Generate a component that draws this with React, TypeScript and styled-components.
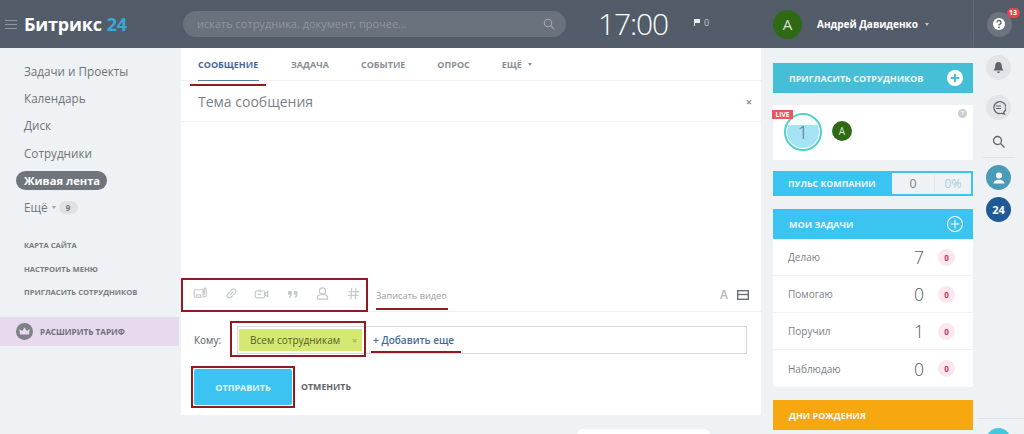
import React from "react";
import styled, { createGlobalStyle } from "styled-components";

const Global = createGlobalStyle`
  html, body { margin: 0; padding: 0; height: 434px; overflow: hidden; background: #eef2f4; }
  body { font-family: "Open Sans", "Liberation Sans", sans-serif; }
  * { box-sizing: border-box; }
`;

const RED = "#8e1c22";

const Page = styled.div`
  width: 1024px; height: 434px; position: relative; overflow: hidden;
  display: flex; flex-direction: column; background: #eef2f4;
`;
const Header = styled.header`
  height: 48px; flex: none; display: flex; align-items: center;
  background: linear-gradient(#525b67, #535d6b);
`;
const Burger = styled.div`
  width: 12px; margin-left: 5px; display: flex; flex-direction: column; gap: 3px;
  span { display: block; height: 1px; background: #8f969f; }
`;
const Logo = styled.div`
  margin-left: 7px; width: 159px; font-size: 18px; font-weight: 700; color: #fff; line-height: 46px; white-space: nowrap; letter-spacing: -0.2px;
  b { color: #36a9d8; font-weight: 700; margin-left: 5px; }
`;
const Search = styled.div`
  width: 383px; height: 26px; border-radius: 13px; background: #6a727e; display: flex; align-items: center; margin-top: -1px;
  justify-content: space-between; padding: 0 11px 0 14px; font-size: 11px; color: #8f959d;
`;
const Clock = styled.div`
  margin-left: 32px; width: 96px; font-size: 30px; font-weight: 300; color: #fff; letter-spacing: -1.1px; margin-top: -2px;
`;
const FlagCount = styled.div`
  width: 79px; display: flex; align-items: center; gap: 4px; font-size: 9px; color: #c3c8ce; margin-top: -3px;
`;
const Avatar = styled.div<{ $size: number }>`
  width: ${p => p.$size}px; height: ${p => p.$size}px; border-radius: 50%; background: #2e6a14; flex: none;
  color: #d7e4cf; display: flex; align-items: center; justify-content: center; font-size: ${p => Math.round(p.$size * 0.5)}px;
`;
const UserName = styled.div`
  margin-left: 15px; width: 156px; font-size: 10px; font-weight: 700; color: #fff; white-space: nowrap;
  display: flex; align-items: center; gap: 7px;
`;
const Caret = styled.i<{ $c: string }>`
  display: inline-block; width: 0; height: 0; border: 2.5px solid transparent; border-top: 3px solid ${p => p.$c}; border-bottom: 0;
`;
const HelpCell = styled.div`
  width: 51px; height: 48px; border-left: 1px solid #626a76; display: flex; align-items: center; justify-content: center;
`;
const RoundBtn = styled.div<{ $bg?: string; $mt?: number }>`
  width: 25px; height: 25px; border-radius: 50%; background: ${p => p.$bg || "#e2e5e8"}; position: relative;
  display: flex; align-items: center; justify-content: center; flex: none; margin-top: ${p => p.$mt || 0}px;
  color: #fff; font-size: 11px; font-weight: 700;
`;
const Badge = styled.span`
  position: absolute; top: -4px; right: -8px; height: 10px; min-width: 13px; padding: 0 2px; border-radius: 5px; background: #e0464d;
  color: #fff; font-size: 7px; font-weight: 700; line-height: 10px; text-align: center;
`;

const Body = styled.div`flex: 1; display: flex; min-height: 0;`;
const Side = styled.nav`width: 181px; flex: none; display: flex; flex-direction: column; padding-top: 14px;`;
const SideItem = styled.div<{ $active?: boolean }>`
  height: 19px; margin: 0 0 8.2px ${p => (p.$active ? 16 : 24)}px; font-size: ${p => (p.$active ? 11.2 : 11.7)}px; line-height: 19px; white-space: nowrap;
  color: ${p => (p.$active ? "#fff" : "#6f7479")}; display: flex; align-items: center; gap: 4px;
  ${p => p.$active && "width: 91px; padding-left: 8px; background: #70757d; border-radius: 10px; font-weight: 700;"}
`;
const Count = styled.span`
  width: 19px; height: 13px; border-radius: 7px; background: #dfe2e5; color: #6f7479; font-size: 8px; font-weight: 700; margin-left: -1px;
  display: flex; align-items: center; justify-content: center;
`;
const SmallLinks = styled.div`
  margin: 14px 0 0 24px; display: flex; flex-direction: column; gap: 11.5px; font-size: 7.6px; font-weight: 700; color: #777c82; line-height: 12px;
`;
const Upgrade = styled.div`
  margin-top: 19px; width: 179px; height: 29px; background: #e8daee; display: flex; align-items: center; padding-left: 16px; gap: 7px;
  font-size: 8.2px; font-weight: 700; color: #6b6f75;
`;
const Crown = styled.div`
  width: 17px; height: 17px; border-radius: 50%; background: #7d8087; display: flex; align-items: center; justify-content: center;
`;

const Main = styled.main`
  width: 580px; height: 367px; flex: none; background: #fff; display: flex; flex-direction: column; position: relative; padding-bottom: 7px;
`;
const Tabs = styled.div`
  height: 33px; flex: none; border-bottom: 1px solid #eef0f2; display: flex; padding-left: 17px; gap: 32px;
  font-size: 9px; font-weight: 700; color: #8a8f94;
`;
const Tab = styled.div<{ $active?: boolean }>`
  height: 33px; line-height: 33px; position: relative; white-space: nowrap; display: flex; align-items: center; gap: 6px;
  ${p => p.$active && "color: #3f6a9c; border-bottom: 1px solid #5b7f9f; min-width: 61px;"}
`;
const RedLine = styled.span<{ $w: number; $l: number; $b: number }>`
  position: absolute; height: 2px; background: ${RED}; width: ${p => p.$w}px; left: ${p => p.$l}px; bottom: ${p => p.$b}px;
`;
const Subject = styled.div`
  height: 41px; flex: none; border-bottom: 1px solid #f0f2f3; display: flex; align-items: center; justify-content: space-between;
  padding: 0 9px 0 17px; font-size: 14px; color: #7c8186;
`;
const Close = styled.span`font-size: 11px; font-weight: 700; color: #8c9196; line-height: 1;`;
const Editor = styled.div`flex: 1;`;
const ToolRow = styled.div`
  height: 34px; flex: none; border-bottom: 1px solid #eef0f2; display: flex; align-items: center; position: relative;
`;
const ToolBox = styled.div`
  width: 187px; height: 34px; border: 2px solid ${RED}; display: flex; align-items: center; justify-content: space-between; padding: 0 5px 2px 10px;
`;
const VideoLink = styled.div`
  margin-left: 8px; font-size: 9.2px; color: #9a9ea3; position: relative; line-height: 28px; top: 1px;
`;
const ToolRight = styled.div`
  margin-left: auto; margin-right: 12px; display: flex; align-items: center; gap: 9px;
  font-size: 12px; font-weight: 600; color: #b5b8bb;
`;
const ToRow = styled.div`
  margin-top: 14px; height: 28px; flex: none; display: flex; align-items: center; padding-left: 13px; font-size: 10px; color: #55595e;
`;
const ToField = styled.div`
  margin-left: 16px; width: 510px; height: 28px; border: 1px solid #d6d9dc; display: flex; align-items: center; position: relative; padding-left: 1px;
`;
const RedBox = styled.div`
  position: absolute; left: -8px; top: -6px; width: 136px; height: 36px; border: 2px solid ${RED}; pointer-events: none;
`;
const Chip = styled.div`
  width: 123px; height: 22px; background: #d4e972; color: #54592e; font-size: 10px; display: flex; align-items: center; justify-content: space-between;
  padding: 0 5px 0 11px; white-space: nowrap;
  i { font-style: normal; color: #a4b54f; font-weight: 700; font-size: 9px; }
`;
const AddMore = styled.div`
  margin-left: 11px; color: #3f6a9c; font-size: 10px; font-weight: 600; position: relative; white-space: nowrap;
`;
const Actions = styled.div`
  margin-top: 12px; display: flex; align-items: center; padding-left: 10px;
`;
const SendBox = styled.div`
  width: 104px; height: 42px; border: 2px solid ${RED}; padding: 1px; display: flex;
`;
const Send = styled.button`
  flex: 1; border: 0; border-radius: 2px; background: #3bc4f2; color: #e4f6fc; font: 700 9px "Open Sans", sans-serif;
`;
const Cancel = styled.div`margin-left: 6px; font-size: 8.8px; font-weight: 700; color: #5f6368;`;
const BottomTab = styled.div`
  position: absolute; left: 577px; top: 429px; width: 133px; height: 6px; background: #fff; border-radius: 6px 6px 0 0;
`;

const Right = styled.aside`
  width: 200px; flex: none; margin-left: 12px; padding-top: 15px; display: flex; flex-direction: column;
`;
const BarHead = styled.div<{ $bg: string }>`
  height: 30px; flex: none; background: ${p => p.$bg}; color: #f0f9fc; font-size: 9px; font-weight: 700; display: flex; align-items: center;
  justify-content: space-between; padding: 0 10px 0 16px; white-space: nowrap;
`;
const LiveCard = styled.div`
  margin-top: 12px; height: 55px; background: #fff; position: relative; display: flex; align-items: flex-start; padding: 8px 0 0 11px;
`;
const LiveTag = styled.span`
  position: absolute; left: -1px; top: 5px; height: 9px; width: 21px; background: #e8575c; color: #fff; font-size: 6.6px; font-weight: 700;
  line-height: 9px; text-align: center;
`;
const LiveHint = styled.span`
  position: absolute; right: 6px; top: 4px; width: 9px; height: 9px; border-radius: 50%; background: #c9ccd0; color: #fff; font-size: 6px; font-weight: 700;
  line-height: 9px; text-align: center;
`;
const Ring = styled.div`
  width: 38px; height: 38px; border-radius: 50%; border: 2px solid #4fd1c6; padding: 1px; flex: none; display: flex;
`;
const Water = styled.div`
  flex: 1; border-radius: 50%; background: linear-gradient(#f4fbfd 28%, #a5e2f4 28%); color: #4f6c78; font-size: 18px; font-weight: 300;
  display: flex; align-items: center; justify-content: center;
`;
const LiveAvatar = styled.div`margin: 8px 0 0 10px;`;
const Pulse = styled.div`
  margin-top: 11px; height: 25px; background: #3bc4f2; display: flex; align-items: center; padding: 2px 2px 2px 15px;
  color: #f0f9fc; font-size: 8.8px; font-weight: 700; white-space: nowrap;
`;
const PulseBox = styled.div`
  margin-left: auto; width: 79px; height: 21px; background: #eef2f4; display: flex; align-items: center; font-weight: 400; font-size: 12.5px; color: #7f8489;
  span { flex: 1; text-align: center; }
  span + span { flex: none; width: 37px; border-left: 1px solid #dfe5e8; color: #a9cedb; font-size: 12px; }
`;
const Tasks = styled.div`
  margin-top: 13px; flex: none; display: flex; flex-direction: column;
`;
const TaskRow = styled.div`
  height: 37px; background: #fff; border-bottom: 1px solid #f0f2f3; display: flex; align-items: center; padding-left: 15px; font-size: 10px; color: #7a7f84;
  &:last-child { border-bottom: 0; border-radius: 0 0 3px 3px; }
`;
const TaskNum = styled.span`
  margin-left: auto; font-size: 17.5px; font-weight: 300; color: #555a60; width: 20px; text-align: center;
`;
const ZeroBadge = styled.span`
  width: 17px; height: 17px; border-radius: 50%; background: #fde7ed; color: #c0395f; font-size: 8px; font-weight: 700; display: flex; align-items: center; justify-content: center;
  margin: 0 18px 0 9px;
`;
const Birthdays = styled.div`margin-top: 13px;`;
const Rail = styled.div`
  width: 51px; flex: none; display: flex; flex-direction: column; align-items: center; padding-top: 7px; position: relative;
`;
const RailSearch = styled.div`margin-top: 15px; height: 13px; display: flex;`;
const RailDivider = styled.div`width: 32px; height: 1px; background: #dfe2e5; margin-top: 9px; flex: none;`;
const RailFoot = styled.div`
  position: absolute; left: 4px; right: 0; top: 370px; border-top: 1px solid #dfe2e5; display: flex; justify-content: center; padding-top: 9px; padding-right: 4px;
`;

const Ico = { width: 15, height: 15, viewBox: "0 0 24 24", fill: "none", stroke: "#c6c9cc", strokeWidth: 1.9 } as const;

export default function App() {
  return (
    <Page>
      <Global />
      <Header>
        <Burger><span /><span /><span /></Burger>
        <Logo>Битрикс<b>24</b></Logo>
        <Search>
          <span>искать сотрудника, документ, прочее...</span>
          <svg width="12" height="12" viewBox="0 0 12 12" fill="none" stroke="#a3a8af" strokeWidth="1.1"><circle cx="5" cy="5" r="3.7" /><path d="M8 8l3 3" /></svg>
        </Search>
        <Clock>17:00</Clock>
        <FlagCount>
          <svg width="6" height="7" viewBox="0 0 6 7" fill="#e8eaec"><path d="M0 0h6v4H1v3H0z" /></svg>
          <span>0</span>
        </FlagCount>
        <Avatar $size={29}>А</Avatar>
        <UserName>Андрей Давиденко <Caret $c="#c3c8ce" /></UserName>
        <HelpCell>
          <RoundBtn $bg="#6d7480">
            <svg width="14" height="14" viewBox="0 0 14 14"><circle cx="7" cy="7" r="6" fill="#fff" /><path d="M5 5.5a2 2 0 1 1 3 1.7c-.7.4-1 .7-1 1.3" fill="none" stroke="#5b636e" strokeWidth="1.4" /><circle cx="7" cy="10.4" r=".9" fill="#5b636e" /></svg>
            <Badge>13</Badge>
          </RoundBtn>
        </HelpCell>
      </Header>
      <Body>
        <Side>
          <SideItem>Задачи и Проекты</SideItem>
          <SideItem>Календарь</SideItem>
          <SideItem>Диск</SideItem>
          <SideItem>Сотрудники</SideItem>
          <SideItem $active>Живая лента</SideItem>
          <SideItem>Ещё <Caret $c="#9a9ea3" /> <Count>9</Count></SideItem>
          <SmallLinks>
            <span>КАРТА САЙТА</span>
            <span>НАСТРОИТЬ МЕНЮ</span>
            <span>ПРИГЛАСИТЬ СОТРУДНИКОВ</span>
          </SmallLinks>
          <Upgrade>
            <Crown>
              <svg width="11" height="9" viewBox="0 0 11 9" fill="#e8daee"><path d="M1 7.5L.3 2l2.8 2L5.5.5 7.9 4l2.8-2L10 7.5z" /></svg>
            </Crown>
            РАСШИРИТЬ ТАРИФ
          </Upgrade>
        </Side>
        <Main>
          <Tabs>
            <Tab $active>СООБЩЕНИЕ<RedLine $w={76} $l={-8} $b={-6} /></Tab>
            <Tab>ЗАДАЧА</Tab>
            <Tab>СОБЫТИЕ</Tab>
            <Tab>ОПРОС</Tab>
            <Tab>ЕЩЁ <Caret $c="#8a8f94" /></Tab>
          </Tabs>
          <Subject>Тема сообщения<Close>×</Close></Subject>
          <Editor />
          <ToolRow>
            <ToolBox>
              <svg {...Ico}><path d="M15 6H3a1 1 0 0 0-1 1v10a1 1 0 0 0 1 1h12M6 18v-4h6v4" /><path d="M16 4v11a2.500 2.500 0 0 0 5 0V5a1.500 1.500 0 0 0-3 0v9" /></svg>
              <svg {...Ico}><path d="M10 14l5-5M9 10l-3 3a3.500 3.500 0 0 0 5 5l3-3M15 14l3-3a3.500 3.500 0 0 0-5-5l-3 3" /></svg>
              <svg {...Ico}><rect x="2" y="8" width="15" height="11" rx="2.500" /><path d="M17 12l5-3v8l-5-3M7 8a2 2 0 0 1 4 0M6 13.500h5" /></svg>
              <svg {...Ico} fill="#c6c9cc" stroke="none"><path d="M5 8h6v5c0 3-1.500 5-4 6l-1-1.500c1.500-.8 2.200-2 2.300-3.500H5zM14 8h6v5c0 3-1.500 5-4 6l-1-1.500c1.500-.8 2.200-2 2.300-3.500H14z" /></svg>
              <svg {...Ico}><circle cx="12" cy="8" r="5" /><path d="M4 21v-3c0-2 2-3.500 5-4.500h6c3 1 5 2.500 5 4.500v3z" /></svg>
              <svg {...Ico}><path d="M9 3L8 21M16 3l-1 18M4 9h17M3 15h17" /></svg>
            </ToolBox>
            <VideoLink>Записать видео<RedLine $w={72} $l={0} $b={0} /></VideoLink>
            <ToolRight>
              <span>A</span>
              <svg width="12" height="10" viewBox="0 0 12 10" fill="none" stroke="#6b7075" strokeWidth="1.4"><rect x=".7" y=".7" width="10.600" height="8.600" /><path d="M.7 4.500h10.600" /></svg>
            </ToolRight>
          </ToolRow>
          <ToRow>
            Кому:
            <ToField>
              <RedBox />
              <Chip>Всем сотрудникам<i>×</i></Chip>
              <AddMore>+ Добавить еще<RedLine $w={90} $l={-2} $b={-6} /></AddMore>
            </ToField>
          </ToRow>
          <Actions>
            <SendBox><Send>ОТПРАВИТЬ</Send></SendBox>
            <Cancel>ОТМЕНИТЬ</Cancel>
          </Actions>
        </Main>
        <Right>
          <BarHead $bg="#45bfd6">
            ПРИГЛАСИТЬ СОТРУДНИКОВ
            <svg width="16" height="16" viewBox="0 0 15 15"><circle cx="7.500" cy="7.500" r="7.500" fill="#fff" /><path d="M7.500 3.500v8M3.500 7.500h8" stroke="#45bfd6" strokeWidth="1.800" /></svg>
          </BarHead>
          <LiveCard>
            <LiveTag>LIVE</LiveTag>
            <LiveHint>?</LiveHint>
            <Ring><Water>1</Water></Ring>
            <LiveAvatar><Avatar $size={20}>А</Avatar></LiveAvatar>
          </LiveCard>
          <Pulse>
            ПУЛЬС КОМПАНИИ
            <PulseBox><span>0</span><span>0%</span></PulseBox>
          </Pulse>
          <Tasks>
            <BarHead $bg="#3bc4f2">
              МОИ ЗАДАЧИ
              <svg width="16" height="16" viewBox="0 0 15 15" fill="none" stroke="#fff" strokeWidth="1"><circle cx="7.500" cy="7.500" r="7" /><path d="M7.500 3.500v8M3.500 7.500h8" /></svg>
            </BarHead>
            <TaskRow>Делаю<TaskNum>7</TaskNum><ZeroBadge>0</ZeroBadge></TaskRow>
            <TaskRow>Помогаю<TaskNum>0</TaskNum><ZeroBadge>0</ZeroBadge></TaskRow>
            <TaskRow>Поручил<TaskNum>1</TaskNum><ZeroBadge>0</ZeroBadge></TaskRow>
            <TaskRow>Наблюдаю<TaskNum>0</TaskNum><ZeroBadge>0</ZeroBadge></TaskRow>
          </Tasks>
          <Birthdays>
            <BarHead $bg="#f7a70f">ДНИ РОЖДЕНИЯ</BarHead>
          </Birthdays>
        </Right>
        <Rail>
          <RoundBtn $bg="#e2e5e8">
            <svg width="13" height="13" viewBox="0 0 13 13" fill="#5f656c"><path d="M6.500 1C4 1 3.200 3 3.200 5c0 2.500-1.200 3.500-1.700 4.500h10C11 8.500 9.800 7.500 9.800 5 9.800 3 9 1 6.500 1zM5 10.500h3a1.500 1.500 0 0 1-3 0z" /></svg>
          </RoundBtn>
          <RoundBtn $bg="#e2e5e8" $mt={15}>
            <svg width="15" height="15" viewBox="0 0 15 15" fill="none" stroke="#5f656c" strokeWidth="1.200"><path d="M12.500 12.500l1 1.500-2.500-.7a6 6 0 1 1 1.500-.8z" /><path d="M5 6h5M5 8.500h5" /></svg>
          </RoundBtn>
          <RailSearch>
            <svg width="13" height="13" viewBox="0 0 13 13" fill="none" stroke="#5f656c" strokeWidth="1.300"><circle cx="5.500" cy="5.500" r="4" /><path d="M8.500 8.500l4 4" /></svg>
          </RailSearch>
          <RailDivider />
          <RoundBtn $bg="#4b9ab8" $mt={7}>
            <svg width="14" height="14" viewBox="0 0 14 14" fill="#fff"><circle cx="7" cy="4.500" r="3" /><path d="M1.500 12.500c0-2.500 2.500-3 4-3.800h3c1.500.8 4 1.300 4 3.800z" /></svg>
          </RoundBtn>
          <RoundBtn $bg="#1f5a96" $mt={7}>24</RoundBtn>
          <RailFoot><RoundBtn $bg="#45c8dc" /></RailFoot>
        </Rail>
      </Body>
      <BottomTab />
    </Page>
  );
}
